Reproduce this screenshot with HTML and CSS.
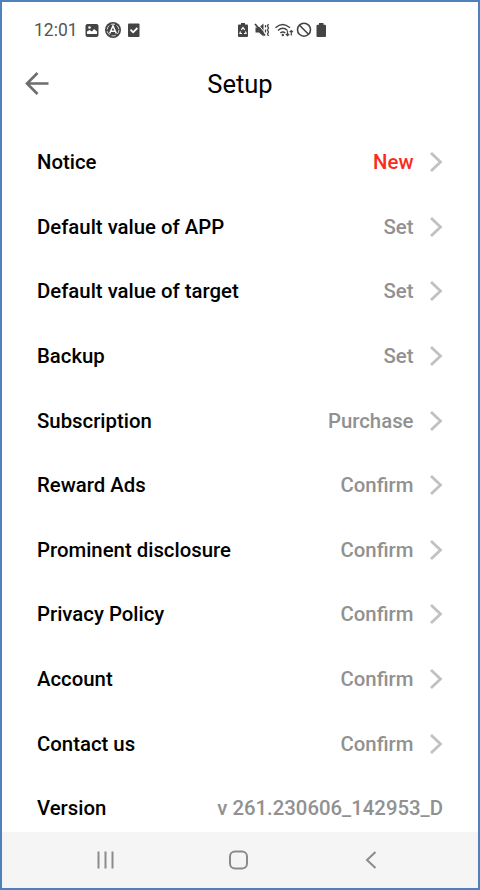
FILE: index.html
```html
<!DOCTYPE html>
<html lang="en">
<head>
  <meta charset="UTF-8">
  <title>Setup</title>
  <link rel="stylesheet" href="styles.css">
</head>
<body>

<div class="phone">
  <div class="status-bar">
    <span class="clock">12:01</span>
    <svg class="status-left" width="56" height="18" viewBox="0 0 56 18">
      <!-- picture -->
      <rect x="0.5" y="3" width="13" height="13" rx="2" fill="#444"/>
      <path d="M2 13v-2.500l2.500-1.500 2.500 1.500 2-2.500 3 2.500V13z" fill="#fff"/>
      <circle cx="4.500" cy="6.500" r="1.3" fill="#fff"/>
      <!-- round app badge -->
      <circle cx="28" cy="9" r="8" fill="#444"/>
      <circle cx="28" cy="9" r="5.9" fill="none" stroke="#ddd" stroke-width="1" stroke-dasharray="4.4 1.8"/>
      <path d="M24.7 12.5L28 4.8l3.3 7.7M26 10.2h4" fill="none" stroke="#fff" stroke-width="1.5"/>
      <!-- checked box -->
      <rect x="43" y="2.5" width="11.5" height="13.5" rx="1" fill="#444"/>
      <path d="M45.5 8.7l2.6 2.6 4.3-4.3" fill="none" stroke="#fff" stroke-width="1.8"/>
    </svg>
    <svg class="status-right" width="92" height="18" viewBox="0 0 92 18">
      <!-- battery saver -->
      <path d="M4 2h4v1.5h2q1 0 1 1V15q0 1-1 1H2q-1 0-1-1V4.5q0-1 1-1h2z" fill="#444"/>
      <path d="M4.3 8.8L6 6.5l1.7 2.3M8.5 10.5l.6 2H7M5 12.5H2.9l.6-2" fill="none" stroke="#fff" stroke-width="1.1"/>
      <!-- muted, vibrate -->
      <path d="M18.5 6.500h3.500l4.500-4v13L22 11.500h-3.500z" fill="#444"/>
      <path d="M20.800 3L27 10.600" stroke="#fff" stroke-width="1"/>
      <path d="M18 3L28 14.500" stroke="#444" stroke-width="1.8"/>
      <path d="M28.500 4v2.500M28.500 8.500v3M31.500 3l-1 2 1 2-1 2 1 2-1 2 1 2" fill="none" stroke="#444" stroke-width="1.3"/>
      <!-- wifi -->
      <g fill="none" stroke="#444" stroke-width="1.4">
        <path d="M38.500 6.800q7-6.800 14.500 0M41 9.500q4.700-4.500 9.500 0M43.300 12q2.500-2.200 5 0"/>
        <path d="M50.500 10v4.500M48.800 13l1.700 1.700 1.700-1.700M54.300 14.500V9.500M52.600 11.200l1.700-1.700 1.700 1.700" stroke-width="1.2"/>
      </g>
      <circle cx="45.8" cy="14" r="1.2" fill="#444"/>
      <!-- blocked -->
      <circle cx="67" cy="8.7" r="6.500" fill="none" stroke="#444" stroke-width="1.6"/>
      <path d="M62.500 4.200l9 9" stroke="#444" stroke-width="1.6"/>
      <!-- battery -->
      <path d="M82 2h4.500v1.700h1.500q1 0 1 1V15q0 1-1 1h-7.500q-1 0-1-1V4.700q0-1 1-1H82z" fill="#444"/>
    </svg>
  </div>

  <header>
    <svg class="back" width="26" height="26" viewBox="0 0 26 26">
      <path d="M13.500 2L3 12.500 13.500 23M3 12.500h21.500" fill="none" stroke="#6d6d6d" stroke-width="2.6"/>
    </svg>
    <h1>Setup</h1>
  </header>

  <ul class="menu">
    <li><span>Notice</span><span class="value new">New</span><svg class="chevron" viewBox="0 0 14 22"><path d="M2 2l9.500 9L2 20"/></svg></li>
    <li><span>Default value of APP</span><span class="value">Set</span><svg class="chevron" viewBox="0 0 14 22"><path d="M2 2l9.500 9L2 20"/></svg></li>
    <li><span>Default value of target</span><span class="value">Set</span><svg class="chevron" viewBox="0 0 14 22"><path d="M2 2l9.500 9L2 20"/></svg></li>
    <li><span>Backup</span><span class="value">Set</span><svg class="chevron" viewBox="0 0 14 22"><path d="M2 2l9.500 9L2 20"/></svg></li>
    <li><span>Subscription</span><span class="value">Purchase</span><svg class="chevron" viewBox="0 0 14 22"><path d="M2 2l9.500 9L2 20"/></svg></li>
    <li><span>Reward Ads</span><span class="value">Confirm</span><svg class="chevron" viewBox="0 0 14 22"><path d="M2 2l9.500 9L2 20"/></svg></li>
    <li><span>Prominent disclosure</span><span class="value">Confirm</span><svg class="chevron" viewBox="0 0 14 22"><path d="M2 2l9.500 9L2 20"/></svg></li>
    <li><span>Privacy Policy</span><span class="value">Confirm</span><svg class="chevron" viewBox="0 0 14 22"><path d="M2 2l9.500 9L2 20"/></svg></li>
    <li><span>Account</span><span class="value">Confirm</span><svg class="chevron" viewBox="0 0 14 22"><path d="M2 2l9.500 9L2 20"/></svg></li>
    <li><span>Contact us</span><span class="value">Confirm</span><svg class="chevron" viewBox="0 0 14 22"><path d="M2 2l9.500 9L2 20"/></svg></li>
    <li><span>Version</span><span class="value">v 261.230606_142953_D</span></li>
  </ul>

  <nav>
    <svg width="20" height="20" viewBox="0 0 20 20"><path d="M2.500 1.500v17M9.500 1.500v17M16.500 1.500v17"/></svg>
    <svg width="20" height="20" viewBox="0 0 20 20"><rect x="1" y="1.500" width="17" height="17" rx="5"/></svg>
    <svg width="20" height="20" viewBox="0 0 20 20"><path d="M14.500 2L6 10l8.500 8"/></svg>
  </nav>
</div>

</body>
</html>
```
FILE: styles.css
```css
* {
  box-sizing: border-box;
}

body {
  margin: 0;
  font-family: Roboto, sans-serif;
  background: #fff;
}

.phone {
  display: flex;
  flex-direction: column;
  height: 890px;
  border: 2px solid #4f81bd;
  overflow: hidden;
}

.status-bar {
  display: flex;
  flex-shrink: 0;
  align-items: center;
  height: 44px;
  padding: 12px 0 0 32px;
}

.clock {
  width: 51px;
  font-size: 17.5px;
  color: #555;
}

.status-right {
  margin-left: 96px;
}

header {
  display: grid;
  flex-shrink: 0;
  grid-template-columns: 26px 1fr 26px;
  align-items: center;
  height: 75px;
  padding: 0 22px;
}

h1 {
  grid-column: 2;
  margin: 0;
  padding-top: 1px;
  font-size: 25.5px;
  font-weight: 400;
  text-align: center;
}

.menu {
  flex: 1;
  min-height: 0;
  margin: 0;
  padding: 9px 35px 0;
  list-style: none;
}

.menu li {
  display: flex;
  align-items: center;
  height: 64.6px;
  font-size: 20.35px;
  font-weight: 500;
  color: #000;
}

.menu .value {
  margin-left: auto;
  color: #919191;
}

.menu .new {
  color: #fb2b1d;
}

.chevron {
  width: 14px;
  height: 22px;
  margin-left: 15.5px;
  fill: none;
  stroke: #c1c1c1;
  stroke-width: 2.8;
}

nav {
  display: flex;
  flex-shrink: 0;
  justify-content: space-between;
  align-items: center;
  height: 56px;
  padding: 0 97px 0 94px;
  background: #f5f5f5;
}

nav svg {
  fill: none;
  stroke: #8b8b8b;
  stroke-width: 2;
}
```
